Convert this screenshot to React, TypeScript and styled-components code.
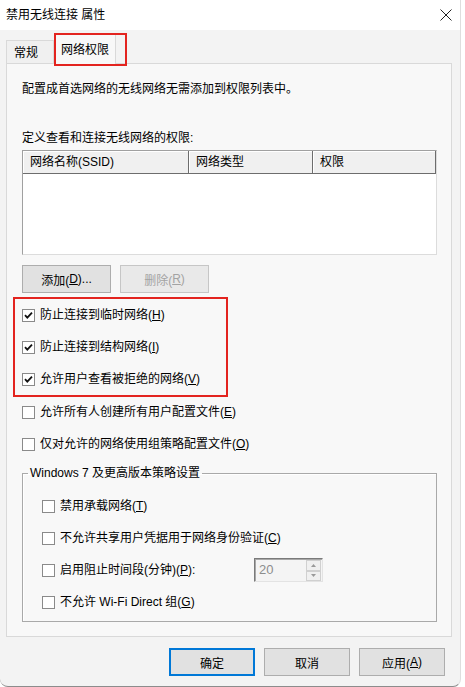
import styled, { createGlobalStyle } from "styled-components";

const GlobalStyle = createGlobalStyle`
  html, body {
    margin: 0;
    padding: 0;
    background: #ffffff;
  }
  body {
    font-family: "Liberation Sans", "Noto Sans CJK SC", sans-serif;
    font-size: 12px;
    color: #000;
  }
  * {
    box-sizing: border-box;
  }
`;

const Window = styled.div`
  width: 461px;
  height: 687px;
  background: #f3f3f3;
  border-right: 1px solid #dedede;
  border-bottom: 1px solid #8c8c8c;
  border-bottom-left-radius: 8px;
  border-bottom-right-radius: 8px;
  display: flex;
  flex-direction: column;
  overflow: hidden;
`;

const TitleBar = styled.div`
  height: 30px;
  flex: 0 0 30px;
  background: #ffffff;
  display: flex;
  align-items: center;
  justify-content: space-between;
  padding: 0 8px 0 6px;
`;

const Title = styled.div`
  font-size: 12px;
  line-height: 16px;
`;

const Body = styled.div`
  padding: 3px 8px 0 6px;
  display: flex;
  flex-direction: column;
`;

const TabStrip = styled.div`
  position: relative;
  height: 30px;
  display: flex;
  align-items: flex-end;
  z-index: 1;
`;

const Tab = styled.div<{ $active?: boolean }>`
  width: ${(p) => (p.$active ? 62 : 48)}px;
  height: ${(p) => (p.$active ? 31 : 23)}px;
  margin-bottom: ${(p) => (p.$active ? -1 : 0)}px;
  border: 1px solid #d9d9d9;
  border-bottom: none;
  background: ${(p) => (p.$active ? "#f8f8f8" : "#f0f0f0")};
  padding-left: ${(p) => (p.$active ? 6 : 7)}px;
  padding-top: ${(p) => (p.$active ? 2 : 1)}px;
  display: flex;
  align-items: center;
  line-height: 16px;
`;

const Annotation = styled.div`
  position: absolute;
  left: 48px;
  top: 0;
  width: 73px;
  height: 33px;
  border: 2px solid #e3241f;
  pointer-events: none;
`;

const Panel = styled.div`
  height: 574px;
  border: 1px solid #d9d9d9;
  background: #f8f8f8;
  padding: 0 14px 0 15px;
  display: flex;
  flex-direction: column;
`;

const Text = styled.div<{ $top: number }>`
  margin-top: ${(p) => p.$top}px;
  line-height: 16px;
`;

const Table = styled.div`
  margin-top: 4px;
  height: 105px;
  background: #ffffff;
  border: 1px solid;
  border-color: #a0a0a0 #dcdcdc #dcdcdc #a0a0a0;
`;

const HeaderRow = styled.div`
  display: flex;
  height: 23px;
`;

const HeaderCell = styled.div<{ $w?: number }>`
  ${(p) => (p.$w ? `flex: 0 0 ${p.$w}px;` : "flex: 1;")}
  background: #f0f0f0;
  border-right: 1px solid #6d6d6d;
  border-bottom: 1px solid #6d6d6d;
  box-shadow: inset 1px 1px 0 #ffffff;
  padding-left: 7px;
  line-height: 22px;
`;

const ButtonRow = styled.div`
  margin-top: 10px;
  display: flex;
  gap: 9px;
`;

const SmallButton = styled.div<{ $disabled?: boolean }>`
  width: 89px;
  height: 28px;
  border: 1px solid ${(p) => (p.$disabled ? "#c6c6c6" : "#adadad")};
  background: ${(p) => (p.$disabled ? "#e9e9e9" : "#e1e1e1")};
  color: ${(p) => (p.$disabled ? "#a3a3a3" : "#000")};
  display: flex;
  align-items: center;
  justify-content: center;
`;

const Highlight = styled.div`
  margin-top: 4px;
  margin-left: -9px;
  width: 215px;
  border: 2px solid #e3241f;
  padding-left: 7px;
`;

const CheckRow = styled.div<{ $indent?: number }>`
  height: 32px;
  display: flex;
  align-items: center;
  gap: 5px;
  padding-left: ${(p) => p.$indent ?? 0}px;
  line-height: 16px;
`;

const Box = styled.div`
  width: 13px;
  height: 13px;
  flex: 0 0 13px;
  border: 1px solid #8a8a8a;
  background: #ffffff;
  display: flex;
  align-items: center;
  justify-content: center;
`;

const Key = styled.span`
  text-decoration: underline;
`;

const Group = styled.fieldset`
  margin: 5px 0 0;
  padding: 9px 0 3px 5px;
  min-width: 0;
  width: 100%;
  border: 1px solid #a9a9a9;
  box-shadow: inset 1px 1px 0 #ffffff;
`;

const Legend = styled.legend`
  padding: 0 2px;
  line-height: 16px;
`;

const SpinLabel = styled.span`
  flex: 0 0 189px;
`;

const Spinner = styled.div`
  width: 69px;
  height: 24px;
  display: flex;
  border: 1px solid;
  border-color: #7a7a7a #e3e3e3 #e3e3e3 #7a7a7a;
  box-shadow: inset 1px 1px 0 #a8a8a8;
  background: #f4f4f4;
`;

const SpinValue = styled.div`
  flex: 1;
  color: #8d8d8d;
  font-size: 13px;
  padding: 2px 0 0 4px;
  line-height: 18px;
`;

const SpinArrows = styled.div`
  width: 16px;
  display: flex;
  flex-direction: column;
  padding: 1px 1px 0 0;
`;

const SpinArrow = styled.div`
  flex: 1;
  border: 1px solid #d0d0d0;
  background: #f0f0f0;
  display: flex;
  align-items: center;
  justify-content: center;
`;

const Footer = styled.div`
  padding: 11px 7px 0 0;
  display: flex;
  justify-content: flex-end;
  gap: 9px;
`;

const DialogButton = styled.div<{ $primary?: boolean }>`
  width: 86px;
  height: 28px;
  border: ${(p) => (p.$primary ? "2px solid #0078d7" : "1px solid #adadad")};
  background: #e1e1e1;
  display: flex;
  align-items: center;
  justify-content: center;
`;

function Check({ checked }: { checked?: boolean }) {
  return (
    <Box>
      {checked && (
        <svg width="9" height="9" viewBox="0 0 9 9">
          <path d="M1 4.2 L3.3 6.6 L8 1.6" fill="none" stroke="#111" strokeWidth="1.8" />
        </svg>
      )}
    </Box>
  );
}

function CloseIcon() {
  return (
    <svg width="12" height="12" viewBox="0 0 12 12">
      <path d="M0.5 0.5 L11.5 11.5 M11.5 0.5 L0.5 11.5" stroke="#222" strokeWidth="1" />
    </svg>
  );
}

function Arrow({ up }: { up?: boolean }) {
  return (
    <svg width="5" height="3" viewBox="0 0 5 3">
      <path d={up ? "M0 3 L2.5 0 L5 3 Z" : "M0 0 L2.5 3 L5 0 Z"} fill="#9a9a9a" />
    </svg>
  );
}

export default function App() {
  return (
    <>
      <GlobalStyle />
      <Window>
        <TitleBar>
          <Title>禁用无线连接 属性</Title>
          <CloseIcon />
        </TitleBar>
        <Body>
          <TabStrip>
            <Tab>常规</Tab>
            <Tab $active>网络权限</Tab>
            <Annotation />
          </TabStrip>
          <Panel>
            <Text $top={17}>配置成首选网络的无线网络无需添加到权限列表中。</Text>
            <Text $top={33}>定义查看和连接无线网络的权限:</Text>
            <Table>
              <HeaderRow>
                <HeaderCell $w={166}>网络名称(SSID)</HeaderCell>
                <HeaderCell $w={124}>网络类型</HeaderCell>
                <HeaderCell>权限</HeaderCell>
              </HeaderRow>
            </Table>
            <ButtonRow>
              <SmallButton>
                添加(<Key>D</Key>)...
              </SmallButton>
              <SmallButton $disabled>
                删除(<Key>R</Key>)
              </SmallButton>
            </ButtonRow>
            <Highlight>
              <CheckRow>
                <Check checked />
                <span>
                  防止连接到临时网络(<Key>H</Key>)
                </span>
              </CheckRow>
              <CheckRow>
                <Check checked />
                <span>
                  防止连接到结构网络(<Key>I</Key>)
                </span>
              </CheckRow>
              <CheckRow>
                <Check checked />
                <span>
                  允许用户查看被拒绝的网络(<Key>V</Key>)
                </span>
              </CheckRow>
            </Highlight>
            <CheckRow style={{ marginTop: -1 }}>
              <Check />
              <span>
                允许所有人创建所有用户配置文件(<Key>E</Key>)
              </span>
            </CheckRow>
            <CheckRow>
              <Check />
              <span>
                仅对允许的网络使用组策略配置文件(<Key>O</Key>)
              </span>
            </CheckRow>
            <Group>
              <Legend>Windows 7 及更高版本策略设置</Legend>
              <CheckRow $indent={14}>
                <Check />
                <span>
                  禁用承载网络(<Key>T</Key>)
                </span>
              </CheckRow>
              <CheckRow $indent={14}>
                <Check />
                <span>
                  不允许共享用户凭据用于网络身份验证(<Key>C</Key>)
                </span>
              </CheckRow>
              <CheckRow $indent={14}>
                <Check />
                <SpinLabel>
                  启用阻止时间段(分钟)(<Key>P</Key>):
                </SpinLabel>
                <Spinner>
                  <SpinValue>20</SpinValue>
                  <SpinArrows>
                    <SpinArrow>
                      <Arrow up />
                    </SpinArrow>
                    <SpinArrow>
                      <Arrow />
                    </SpinArrow>
                  </SpinArrows>
                </Spinner>
              </CheckRow>
              <CheckRow $indent={14}>
                <Check />
                <span>
                  不允许 Wi-Fi Direct 组(<Key>G</Key>)
                </span>
              </CheckRow>
            </Group>
          </Panel>
          <Footer>
            <DialogButton $primary>确定</DialogButton>
            <DialogButton>取消</DialogButton>
            <DialogButton>
              应用(<Key>A</Key>)
            </DialogButton>
          </Footer>
        </Body>
      </Window>
    </>
  );
}
